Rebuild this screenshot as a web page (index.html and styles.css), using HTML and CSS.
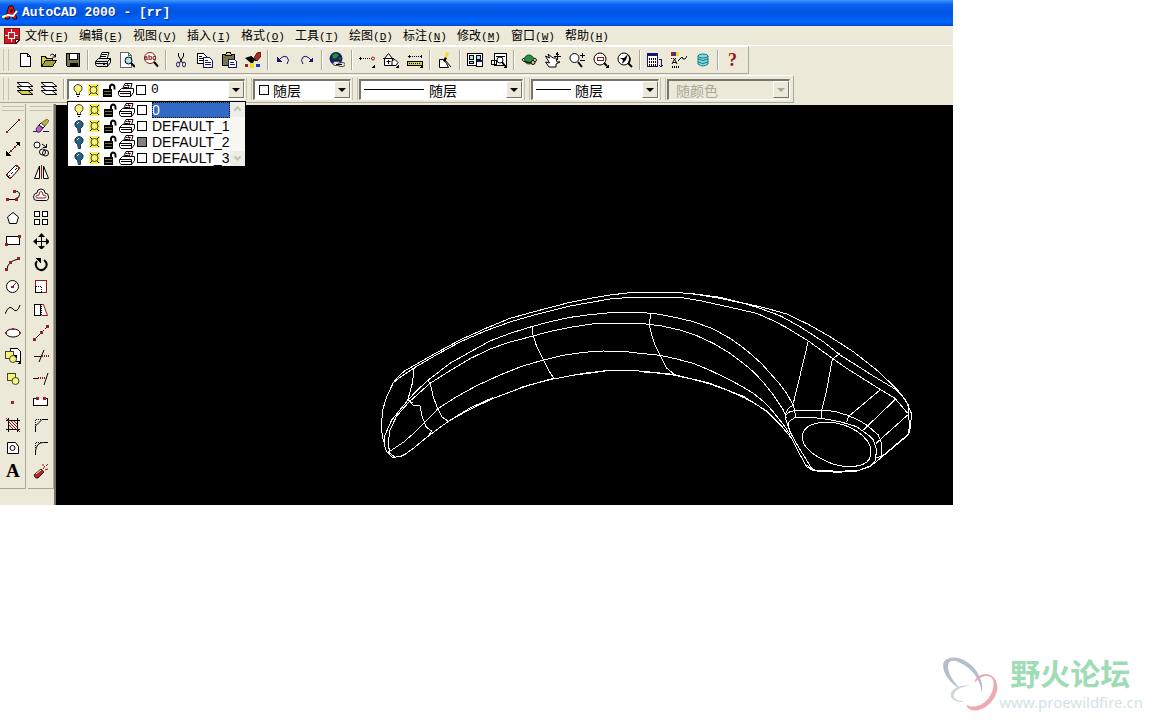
FILE: index.html
```
<!DOCTYPE html>
<html lang="zh-CN">
<head>
<meta charset="utf-8">
<title>AutoCAD 2000 - [rr]</title>
<link rel="stylesheet" href="styles.css">
</head>
<body>
<svg class="sprite" aria-hidden="true">
<symbol id="new" viewBox="0 0 16 16"><path class="w" d="M3.500 1.500h7l3 3v10h-10zM10.500 1.500v3h3"/></symbol>
<symbol id="open" viewBox="0 0 16 16"><path class="y" d="M.5 14.500v-10h4l1 2h6v3"/><path class="o" d="M.5 14.500l4-6h11l-4 6z"/><path class="s" d="M9 3.500q3-3 5 1M14.500 2v3h-3"/></symbol>
<symbol id="save" viewBox="0 0 16 16"><path class="olive" d="M1.500 1.500h13v13h-12l-1-1z"/><path class="w" d="M4.500 1.500h8v6h-8z"/><path class="k" d="M4.500 10.500h8v4h-8z"/><path class="w" d="M6 11.500h1v2H6z"/></symbol>
<symbol id="print" viewBox="0 0 16 16"><path class="w s" d="M4.500 7L7 .5h7L12 7M7 2.500h5M6 4.500h5"/><path class="g s" d="M.5 9.500l3-3h12v4l-3 4H2l-1.500-2z"/><path class="s" d="M.5 9.500h12v5M12.500 9.500l3-3M1 11.500h11"/><path class="y s" d="M8 12.500h2"/></symbol>
<symbol id="preview" viewBox="0 0 16 16"><path class="w gray" d="M1.500.5h8l3 3v12h-11zM9.500.5v3h3"/><circle class="c" cx="9.500" cy="8.500" r="3.500"/><path class="b2 s" d="M12 11l4 4"/></symbol>
<symbol id="find" viewBox="0 0 16 16"><circle class="w rd" cx="7" cy="6" r="5.500"/><path class="b2 s" d="M11 10l4 4.500"/><text class="tiny" x="1" y="8">abc</text></symbol>
<symbol id="cut" viewBox="0 0 16 16"><path class="s" d="M5.500 1v3l4 7M10.500 1v3l-4 7"/><ellipse class="nb" cx="5" cy="12.500" rx="1.500" ry="2.500"/><ellipse class="nb" cx="11" cy="12.500" rx="1.500" ry="2.500"/></symbol>
<symbol id="copy" viewBox="0 0 16 16"><path class="w" d="M.5 1.500h6l3 3v7h-9z"/><path class="w nb" d="M6.500 5.500h6l3 3v7h-9zM8 8.500h3M8 10.500h6M8 12.500h6"/><path d="M2 4.500h3M2 6.500h4M2 8.500h4"/></symbol>
<symbol id="paste" viewBox="0 0 16 16"><path class="olive" d="M1.500 2.500h12v11h-12z"/><path class="y" d="M4.500 3.500l1-3h4l1 3z"/><path class="w nb" d="M7.500 7.500h6l2 2v6h-8zM9 10.500h4M9 12.500h5"/></symbol>
<symbol id="match" viewBox="0 0 16 16"><path class="k s" d="M0 6l6-2 4 4-3 4z"/><path class="dyn s" d="M9 6l3-5 4-1v4l-4 5z"/><path class="w s" d="M6 4l5 5"/><path class="rf" d="M0 12h3v3H0z"/><path class="yy" d="M5 11h4v5H5z"/><path class="bf" d="M11 12h4v3h-4z"/></symbol>
<symbol id="undo" viewBox="0 0 16 16"><path class="nb s" d="M3 9l3-3q3-3 6-1 3 3 0 7"/><path class="nf" d="M2 5v5h5z"/></symbol>
<symbol id="redo" viewBox="0 0 16 16"><path class="nb s" d="M13 9l-3-3Q7 3 4 5q-3 3 0 7"/><path class="nf" d="M14 5v5H9z"/></symbol>
<symbol id="globe" viewBox="0 0 16 16"><circle class="nf" cx="7" cy="6.500" r="6.500"/><path class="gr s" d="M3 3l4-2 3 2-2 3-4 1zM9 7l3-2v3z"/><path class="link s" d="M6 9.500h3a2 2 0 010 4H6a2 2 0 010-4zM11 10.500h3a2 2 0 010 4h-3a2 2 0 010-4z"/><path d="M7 12h6"/></symbol>
<symbol id="track" viewBox="0 0 16 16"><path class="dot" d="M0 6.500h13"/><path d="M1.500 5v3"/><circle class="w rd" cx="14" cy="6.500" r="1.500"/><path class="k" d="M16 12v4h-4z"/></symbol>
<symbol id="ucs" viewBox="0 0 16 16"><path class="w s" d="M1.500 6.500l4-5 4 5v7h-8zM0 6.500h11M5.500 8v4M3.500 9.500h4"/><path class="w s" d="M9 8.500l3-1 3 3-2 3H9z"/><path class="k" d="M16 12v4h-4z"/></symbol>
<symbol id="dist" viewBox="0 0 16 16"><path class="dot" d="M1 4.500h14"/><path class="y" d="M.5 9.500h15v4H.5z"/><path class="dot" d="M2 11h12"/><path d="M2 3v3M14 3v3"/><path class="k" d="M16 12v4h-4z"/></symbol>
<symbol id="redraw" viewBox="0 0 16 16"><path class="w s" d="M2.500 7.500h4l3 4 2 4h-9z"/><path class="k s" d="M6 9l2-4 2 1-2 4z"/><path class="s" d="M8 8l6 7"/><path class="yy s" d="M8 5l1-5 3 1-2 5z"/></symbol>
<symbol id="views" viewBox="0 0 16 16"><path class="w" d="M.5 1.500h15v12H.5z"/><path class="c" d="M2.500 3.500h4v4h-4zM9.500 3.500h4v4h-4zM2.500 9.500h4v2h-4z"/><path class="w" d="M9.500 8.500h6v6h-6z"/><path class="nf" d="M10 8h6v2h-6z"/></symbol>
<symbol id="nview" viewBox="0 0 16 16"><path class="w" d="M3.500 1.500h12v12h-12zM.5 8.500h5v4h-5z"/><path d="M5 4h9"/><circle class="w" cx="9" cy="8" r="3"/><path class="b2 s" d="M11 10l3 4"/><path class="k" d="M16 12v4h-4z"/></symbol>
<symbol id="orbit" viewBox="0 0 16 16"><circle class="gr" cx="8" cy="7.500" r="4.500"/><path class="s" d="M3.500 6Q-2 8 5 10q10 2 10.500-2 0-1.500-3-2"/><circle class="y" cx="12" cy="10.500" r="2"/></symbol>
<symbol id="pan" viewBox="0 0 16 16"><path class="w s" d="M4 15L.5 10l4 1-4-7 4 2L3 2l5 4h3l1 4h3l-4 2v3z"/><path d="M9 4.500h7M12.500 1v7M11 3l1.500-2L14 3"/></symbol>
<symbol id="zoom" viewBox="0 0 16 16"><circle class="w" cx="5.500" cy="6" r="4.500"/><path class="b2 s" d="M9 10l4 5"/><path d="M11 3.500h5M13.500 1v5M11 8.500h5"/></symbol>
<symbol id="zwin" viewBox="0 0 16 16"><circle class="w" cx="7" cy="7" r="6"/><path class="rd" d="M4.500 5.500h6v3h-6z"/><path class="b2 s" d="M11 11l3 3"/><path class="k" d="M16 12v4h-4z"/></symbol>
<symbol id="zprev" viewBox="0 0 16 16"><circle class="w" cx="7" cy="7" r="6"/><path class="k s" d="M3 6h4l4-4-2 6-4 4 1-4zM11 3q4 2 2 8l-2-1q2-3 0-7z"/><path class="b2 s" d="M11 11l4 4"/></symbol>
<symbol id="props" viewBox="0 0 16 16"><path class="w nb" d="M.5 1.500h10v13H.5z"/><path class="nf" d="M0 1h11v3H0z"/><path class="dot b2" d="M2 7h7M2 10h7M2 13h7"/><path class="nb" d="M12 7h2v7M12 13l2 2 2-2"/></symbol>
<symbol id="dc" viewBox="0 0 16 16"><path class="rf" d="M0 0h3v4H0z"/><path class="yy" d="M5 0h3v4H5z"/><path class="bf" d="M3 0h2v4H3z"/><path class="dot" d="M0 6h5"/><path class="w s" d="M7 9l4-4 1 2h2l2-3"/><path class="s" d="M1 12l2.500-5L6 12M2 10.500h3"/><path class="b2 dot" d="M1 14.500h8"/></symbol>
<symbol id="db" viewBox="0 0 16 16"><path class="db s" d="M3 4v8q5 4 10 0V4z"/><ellipse class="db" cx="8" cy="4" rx="5" ry="2"/><path class="teal s" d="M3 7q5 3 10 0M3 10q5 3 10 0"/></symbol>
<symbol id="help" viewBox="0 0 16 16"><text class="qm" x="3" y="14">?</text></symbol>
<symbol id="layers" viewBox="0 0 16 16"><path class="y s" d="M0 9.500h11l5 4H5z"/><path class="w s" d="M0 5.500h11l5 4H5zM0 1.500h11l5 4H5z"/></symbol>
<symbol id="layer2" viewBox="0 0 16 16"><path class="w s" d="M0 9.500h11l5 4H5zM0 5.500h11l5 4H5zM0 1.500h11l5 4H5z"/></symbol>
<symbol id="bulb" viewBox="0 0 16 16"><path class="yl s" d="M6.500 10.500Q3 8 4 5q4-5 8 0 1 3-2.500 5.500v2h-3z"/><path d="M6 12.500h4M7 14.500h2"/></symbol>
<symbol id="bulboff" viewBox="0 0 16 16"><path class="off s" d="M6.500 10.500Q3 8 4 5q4-5 8 0 1 3-2.500 5.500v4h-2z"/><path class="wl s" d="M6 6l2-2"/></symbol>
<symbol id="sun" viewBox="0 0 16 16"><path class="yl2" d="M2 2h11v12H2z"/><circle cx="7.500" cy="8" r="3.500" class="yl"/><path class="s" d="M3 3l2 2M12 3l-2 2M3 13l2-2M12 13l-2-2"/></symbol>
<symbol id="lock" viewBox="0 0 16 16"><path class="k" d="M1 7h9v8H1z"/><path class="olv" d="M2 9.500h7M2 12.500h7"/><path class="lk s" d="M8 8V5q0-2 2-2.500 3 0 2.500 5"/></symbol>
<symbol id="plot" viewBox="0 0 16 16"><path class="w s" d="M4.500 7L7 1.500h7L12.500 7M7 3.500h5M6 5.500h5"/><path class="w s" d="M.5 9.500l3-3h12v4l-3 4H2l-1.500-2zM.5 9.500h12M2 11.500h10M12.500 9.500v5"/><path class="mg s" d="M8 4l2-2M9 6l3-3"/></symbol>

<symbol id="line" viewBox="0 0 16 16"><path d="M2 14L14 2"/><path class="rf" d="M1 13h2v2H1zM13 1h2v2h-2z"/></symbol>
<symbol id="xline" viewBox="0 0 16 16"><path d="M1 15L15 1"/><path class="k" d="M1 15v-5l5 5zM15 1v5l-5-5z"/><path class="rf" d="M5 9h2v2H5zM9 5h2v2H9z"/></symbol>
<symbol id="mline" viewBox="0 0 16 16"><path class="w s" d="M1 11L11 1l4 3L5 15z"/><path class="dot" d="M3 13L13 3"/><path class="rf" d="M1 10h2v2H1zM11 1h2v2h-2zM4 13h2v2H4zM13 3h2v2h-2z"/></symbol>
<symbol id="pline" viewBox="0 0 16 16"><path class="s" d="M2 12.500h9M9 4.500q5.500-1 5.500 3t-4 4"/><path class="rf" d="M1 11h3v3H1zM10 11h3v3h-3zM8 3h3v3H8z"/></symbol>
<symbol id="poly" viewBox="0 0 16 16"><path class="w s" d="M8 2.500L13.500 7l-2 6.500h-7L2.500 7z"/></symbol>
<symbol id="rect" viewBox="0 0 16 16"><path class="w" d="M1.500 3.500h13v8h-13z"/><path class="rf" d="M13 2h3v3h-3zM0 10h3v3H0z"/></symbol>
<symbol id="arc" viewBox="0 0 16 16"><path class="s" d="M2 14q0-9 12-11"/><path class="rf" d="M0 12h3v3H0zM4 5h3v3H4zM12 1h3v3h-3z"/></symbol>
<symbol id="circle" viewBox="0 0 16 16"><circle class="w" cx="7.500" cy="7.500" r="6"/><path class="rd" d="M7 8l4-4"/><path class="rf" d="M6 7h3v2H6z"/></symbol>
<symbol id="spline" viewBox="0 0 16 16"><path class="s" d="M0 12Q4 2 8 7t7-4"/></symbol>
<symbol id="ellipse" viewBox="0 0 16 16"><ellipse class="w" cx="8" cy="8" rx="7" ry="4"/><path class="rf" d="M0 7h2v2H0zM7 3h2v2H7zM14 7h2v2h-2z"/></symbol>
<symbol id="insert" viewBox="0 0 16 16"><path class="w" d="M5.500.5h7l3 3v10h-10z"/><path class="yl" d="M.5 3.500h8v7h-8z"/><circle class="yl" cx="8" cy="11" r="3.500"/><path class="k" d="M16 12v4h-4zM8 7h4v4z"/></symbol>
<symbol id="block" viewBox="0 0 16 16"><path class="yl" d="M2.500 2.500h8v7h-8z"/><circle class="yl" cx="10.500" cy="10" r="3.500"/></symbol>
<symbol id="point" viewBox="0 0 16 16"><path class="rf" d="M6 7h3v3H6z"/></symbol>
<symbol id="hatch" viewBox="0 0 16 16"><path d="M3.500 1v14M12.500 1v14M1 3.500h14M1 12.500h14"/><path class="rd" d="M4 5l7 7M4 8l4 4M6 4l6 6M9 4l3 3M1 1l3 3M12 12l3 3"/></symbol>
<symbol id="region" viewBox="0 0 16 16"><path class="w s" d="M2.500 2.500h8l3 4v7h-11z"/><circle cx="7.500" cy="8" r="2.500"/></symbol>
<symbol id="text" viewBox="0 0 16 16"><text class="biga" x="1" y="14">A</text></symbol>
<symbol id="erase" viewBox="0 0 16 16"><path class="nb" d="M0 13.500h5M10 13.500h6"/><path class="pk s" d="M3 11l3-4 4 3-3 4H4z"/><path class="w s" d="M6 7l2-2 4 3-2 2z"/><path class="olv s" d="M8 5l6-4 2 2-4 5z"/></symbol>
<symbol id="copyo" viewBox="0 0 16 16"><circle class="w" cx="4" cy="4" r="3"/><circle class="w" cx="9.500" cy="11" r="3"/><circle cx="12.500" cy="12" r="3"/><path class="s" d="M9 3l4 3M13.500 3v3.500H10"/></symbol>
<symbol id="mirror" viewBox="0 0 16 16"><path class="w s" d="M6.500 2v12.500h-5zM10.500 2v12.500h5z"/><path class="rd" d="M8.500 1v14"/></symbol>
<symbol id="offset" viewBox="0 0 16 16"><path class="w s" d="M4 6q0-4 4-4t4 4q3.500 0 3.500 4T12 13.500H4Q.5 13.500.5 10T4 6z"/><path class="rd s" d="M6 8q0-3.500 2-3.500T10 8q3 0 3 1.500T12 11H4q-1 0-1-1.500T6 8z"/></symbol>
<symbol id="array" viewBox="0 0 16 16"><path class="w" d="M1.500 1.500h5v5h-5zM9.500 1.500h5v5h-5zM1.500 9.500h5v5h-5zM9.500 9.500h5v5h-5z"/></symbol>
<symbol id="move" viewBox="0 0 16 16"><path d="M1 8.500h15M8.500 1v15"/><path class="k s" d="M8.500 0L12 4H5zM8.500 17L12 13H5zM0 8.500L4 5v7zM17 8.500L13 5v7z"/></symbol>
<symbol id="rotate" viewBox="0 0 16 16"><path class="b2 s" d="M11 4q4 3 2 7-3 5-8 2-4-4-1-8"/><path class="k" d="M2 2h6v6z"/></symbol>
<symbol id="scale" viewBox="0 0 16 16"><path class="w rd" d="M2.500 1.500h11v12h-11z"/><path class="dot" d="M2.500 7.500h6v6"/><path d="M2.500 7v6.500h6"/></symbol>
<symbol id="stretch" viewBox="0 0 16 16"><path class="w" d="M1.500 2.500h6v11h-6z"/><path class="w rd s" d="M8.500 2.500h2l4 11h-6"/><path class="dot" d="M8.500 2v12"/></symbol>
<symbol id="lengthen" viewBox="0 0 16 16"><path d="M2 14l7-7"/><path class="dot" d="M9 7l5-5"/><path class="rf" d="M0 13h3v3H0zM7 6h3v3H7zM13 0h3v3h-3z"/></symbol>
<symbol id="trim" viewBox="0 0 16 16"><path class="s" d="M1 8.500h7M11 2L6 14"/><path class="rd b2 dot" d="M9 8h7"/></symbol>
<symbol id="extend" viewBox="0 0 16 16"><path class="s" d="M0 7.500h5M15 2l-4 12"/><path class="rd b2 dot" d="M5 7h7"/></symbol>
<symbol id="break" viewBox="0 0 16 16"><path class="w" d="M4 4.500H.5v7h14v-7H12"/><path class="rf" d="M3 3h3v3H3zM10 3h3v3h-3z"/></symbol>
<symbol id="chamfer" viewBox="0 0 16 16"><path class="s" d="M2.500 15V9l6.500-6.500h6"/><path class="dot" d="M2.500 8V2.500h6"/></symbol>
<symbol id="fillet" viewBox="0 0 16 16"><path class="s" d="M2.500 15v-4q1-8.500 8-8.500H15"/><path class="dot" d="M2.500 8V2.500h6"/></symbol>
<symbol id="explode" viewBox="0 0 16 16"><path class="dyn s" d="M1 12l7-6 3 3-6 6q-3 1-4-3z"/><path class="rd s" d="M10 6l2-3M12 7l3-1M10 3V1M13 3l2-2"/><path class="wl s" d="M3 11l5-4"/></symbol>
</svg>

<div class="app">
  <header class="title">
    <svg class="ico smooth" viewBox="0 0 16 16" aria-hidden="true"><path fill="#d01818" stroke="#300" d="M3 14L7 1h4l4 13h-4l-1-4H8l-1 4zM8 7h2V4z"/><path stroke="#fff" stroke-width="2" fill="none" d="M0 12l6-2 5 1 4-5"/><path stroke="#fc4" fill="none" d="M1 13l4-2"/></svg>
    <h1>AutoCAD 2000 - [rr]</h1>
  </header>
  <nav class="menu">
    <svg class="doc" viewBox="0 0 16 16" aria-hidden="true"><path fill="#d01820" stroke="#801010" d="M.5.500h15v12l-3 3H.5z"/><path stroke="#fff" fill="none" d="M4.500 4.500h6v6h-6zM7.500 1v3M7.500 11v3M1 7.500h3M11 7.500h3"/><path fill="#fff" stroke="#222" d="M15.500 11.500h-4v4z"/></svg>
    <button>文件<span>(<u>F</u>)</span></button><button>编辑<span>(<u>E</u>)</span></button><button>视图<span>(<u>V</u>)</span></button><button>插入<span>(<u>I</u>)</span></button><button>格式<span>(<u>O</u>)</span></button><button>工具<span>(<u>T</u>)</span></button><button>绘图<span>(<u>D</u>)</span></button><button>标注<span>(<u>N</u>)</span></button><button>修改<span>(<u>M</u>)</span></button><button>窗口<span>(<u>W</u>)</span></button><button>帮助<span>(<u>H</u>)</span></button>
  </nav>
  <div class="row"><div class="bar" role="toolbar" aria-label="标准">
    <i class="grip"></i>
    <button aria-label="新建"><svg class="ico"><use href="#new"/></svg></button><button aria-label="打开"><svg class="ico"><use href="#open"/></svg></button><button aria-label="保存"><svg class="ico"><use href="#save"/></svg></button><i class="sep"></i>
    <button aria-label="打印"><svg class="ico"><use href="#print"/></svg></button><button aria-label="打印预览"><svg class="ico"><use href="#preview"/></svg></button><button aria-label="查找"><svg class="ico"><use href="#find"/></svg></button><i class="sep"></i>
    <button aria-label="剪切"><svg class="ico"><use href="#cut"/></svg></button><button aria-label="复制"><svg class="ico"><use href="#copy"/></svg></button><button aria-label="粘贴"><svg class="ico"><use href="#paste"/></svg></button><button aria-label="特性匹配"><svg class="ico"><use href="#match"/></svg></button><i class="sep"></i>
    <button aria-label="放弃"><svg class="ico"><use href="#undo"/></svg></button><button aria-label="重做"><svg class="ico"><use href="#redo"/></svg></button><i class="sep"></i>
    <button aria-label="超级链接"><svg class="ico"><use href="#globe"/></svg></button><i class="sep"></i>
    <button aria-label="追踪"><svg class="ico"><use href="#track"/></svg></button><button aria-label="UCS"><svg class="ico"><use href="#ucs"/></svg></button><button aria-label="距离"><svg class="ico"><use href="#dist"/></svg></button><i class="sep"></i>
    <button aria-label="重画"><svg class="ico"><use href="#redraw"/></svg></button><i class="sep"></i>
    <button aria-label="空中视图"><svg class="ico"><use href="#views"/></svg></button><button aria-label="命名视图"><svg class="ico"><use href="#nview"/></svg></button><i class="sep"></i>
    <button aria-label="三维动态观察"><svg class="ico"><use href="#orbit"/></svg></button><button aria-label="实时平移"><svg class="ico"><use href="#pan"/></svg></button><button aria-label="实时缩放"><svg class="ico"><use href="#zoom"/></svg></button><button aria-label="窗口缩放"><svg class="ico"><use href="#zwin"/></svg></button><button aria-label="缩放上一个"><svg class="ico"><use href="#zprev"/></svg></button><i class="sep"></i>
    <button aria-label="特性"><svg class="ico"><use href="#props"/></svg></button><button aria-label="设计中心"><svg class="ico"><use href="#dc"/></svg></button><button aria-label="数据库连接"><svg class="ico"><use href="#db"/></svg></button><i class="sep"></i>
    <button aria-label="帮助"><svg class="ico"><use href="#help"/></svg></button>
  </div></div>
  <div class="row"><div class="bar" role="toolbar" aria-label="对象特性">
    <i class="grip"></i>
    <button aria-label="图层置为当前"><svg class="ico"><use href="#layers"/></svg></button><button aria-label="图层"><svg class="ico"><use href="#layer2"/></svg></button><i class="sep"></i>
    <div class="combo layer">
      <svg class="ico"><use href="#bulb"/></svg><svg class="ico"><use href="#sun"/></svg><svg class="ico"><use href="#lock"/></svg><svg class="ico"><use href="#plot"/></svg><i class="swatch"></i>
      <select class="mono" aria-label="当前图层"><option>0</option></select><i class="arrow"></i>
      <div class="list">
        <ul role="listbox" aria-label="图层列表">
          <li role="option" aria-selected="true"><svg class="ico"><use href="#bulb"/></svg><svg class="ico"><use href="#sun"/></svg><svg class="ico"><use href="#lock"/></svg><svg class="ico"><use href="#plot"/></svg><i class="swatch"></i><span class="name">0</span></li>
          <li role="option"><svg class="ico"><use href="#bulboff"/></svg><svg class="ico"><use href="#sun"/></svg><svg class="ico"><use href="#lock"/></svg><svg class="ico"><use href="#plot"/></svg><i class="swatch"></i><span class="name">DEFAULT_1</span></li>
          <li role="option"><svg class="ico"><use href="#bulboff"/></svg><svg class="ico"><use href="#sun"/></svg><svg class="ico"><use href="#lock"/></svg><svg class="ico"><use href="#plot"/></svg><i class="swatch dark"></i><span class="name">DEFAULT_2</span></li>
          <li role="option"><svg class="ico"><use href="#bulboff"/></svg><svg class="ico"><use href="#sun"/></svg><svg class="ico"><use href="#lock"/></svg><svg class="ico"><use href="#plot"/></svg><i class="swatch"></i><span class="name">DEFAULT_3</span></li>
        </ul>
        <div class="scroll"><svg viewBox="0 0 14 14"><path d="M4 8l3-3 3 3"/></svg><svg viewBox="0 0 14 14"><path d="M4 5l3 3 3-3"/></svg></div>
      </div>
    </div><i class="grip"></i>
    <div class="combo color"><i class="swatch"></i><select aria-label="颜色"><option>随层</option></select><i class="arrow"></i></div><i class="grip"></i>
    <div class="combo ltype"><i class="rule"></i><select aria-label="线型"><option>随层</option></select><i class="arrow"></i></div><i class="grip"></i>
    <div class="combo lweight"><i class="rule"></i><select aria-label="线宽"><option>随层</option></select><i class="arrow"></i></div><i class="grip"></i>
    <div class="combo plotstyle off"><select aria-label="打印样式" disabled><option>随颜色</option></select><i class="arrow"></i></div>
  </div></div>
  <main class="work">
    <div class="side">
      <div class="tools" role="toolbar" aria-label="绘图">
        <i class="hgrip"></i>
        <button aria-label="直线"><svg class="ico"><use href="#line"/></svg></button><button aria-label="构造线"><svg class="ico"><use href="#xline"/></svg></button><button aria-label="多线"><svg class="ico"><use href="#mline"/></svg></button><button aria-label="多段线"><svg class="ico"><use href="#pline"/></svg></button><button aria-label="正多边形"><svg class="ico"><use href="#poly"/></svg></button><button aria-label="矩形"><svg class="ico"><use href="#rect"/></svg></button><button aria-label="圆弧"><svg class="ico"><use href="#arc"/></svg></button><button aria-label="圆"><svg class="ico"><use href="#circle"/></svg></button><button aria-label="样条曲线"><svg class="ico"><use href="#spline"/></svg></button><button aria-label="椭圆"><svg class="ico"><use href="#ellipse"/></svg></button><button aria-label="插入块"><svg class="ico"><use href="#insert"/></svg></button><button aria-label="创建块"><svg class="ico"><use href="#block"/></svg></button><button aria-label="点"><svg class="ico"><use href="#point"/></svg></button><button aria-label="图案填充"><svg class="ico"><use href="#hatch"/></svg></button><button aria-label="面域"><svg class="ico"><use href="#region"/></svg></button><button aria-label="多行文字"><svg class="ico smooth"><use href="#text"/></svg></button>
      </div>
      <div class="tools" role="toolbar" aria-label="修改">
        <i class="hgrip"></i>
        <button aria-label="删除"><svg class="ico"><use href="#erase"/></svg></button><button aria-label="复制对象"><svg class="ico"><use href="#copyo"/></svg></button><button aria-label="镜像"><svg class="ico"><use href="#mirror"/></svg></button><button aria-label="偏移"><svg class="ico"><use href="#offset"/></svg></button><button aria-label="阵列"><svg class="ico"><use href="#array"/></svg></button><button aria-label="移动"><svg class="ico"><use href="#move"/></svg></button><button aria-label="旋转"><svg class="ico"><use href="#rotate"/></svg></button><button aria-label="缩放"><svg class="ico"><use href="#scale"/></svg></button><button aria-label="拉伸"><svg class="ico"><use href="#stretch"/></svg></button><button aria-label="拉长"><svg class="ico"><use href="#lengthen"/></svg></button><button aria-label="修剪"><svg class="ico"><use href="#trim"/></svg></button><button aria-label="延伸"><svg class="ico"><use href="#extend"/></svg></button><button aria-label="打断"><svg class="ico"><use href="#break"/></svg></button><button aria-label="倒角"><svg class="ico"><use href="#chamfer"/></svg></button><button aria-label="圆角"><svg class="ico"><use href="#fillet"/></svg></button><button aria-label="分解"><svg class="ico"><use href="#explode"/></svg></button>
      </div>
    </div>
    <div class="canvas">
      <svg viewBox="0 0 2691 1200" preserveAspectRatio="xMinYMin meet" role="img" aria-label="rr">
        <g transform="translate(942 525)">
          <path d="M43 490L38 475 34 440 38 390 50 350 70 308 82 292 105 272 130 258 200 218 270 180 345 146 420 115 500 93 600 67 660 55 720 45 780 38H812"/>
          <path d="M70 308L90 292 135 262 200 224 270 186 345 153 420 126 500 103 600 78 720 57 780 52H812"/>
          <path d="M43 490L45 465 65 420 110 365 140 332 175 300 240 250 300 216 360 183 420 160 485 140 540 125 600 112 660 104 720 98 810 97"/>
          <path d="M75 532L60 520 54 490 60 450 80 408 115 368 180 310 240 272 300 236 360 207 420 186 490 168 540 154 600 142 680 130 810 130"/>
          <path d="M52 518L62 512 100 487 130 461 165 426 205 385 260 350 320 317 390 285 455 259 520 240 580 226 640 217 700 213 770 215 810 220"/>
          <path d="M43 490L46 506 52 518 68 532 90 530 105 523 130 505 175 468 235 424 300 388 370 355 450 325 500 309 550 297 640 280 700 273 800 271 812 275"/>
          <path d="M235 424L300 384 370 352M450 323L550 295M600 287L640 282 720 271H800"/>
          <path d="M133 260L127 310 114 358 130 377H150L155 405 168 440 184 453 175 470M110 360L130 370"/>
          <path d="M175 300L183 320 190 352 203 385 215 410 235 424M487 140L489 165 500 200 520 240 535 270 553 297"/>
        </g>
        <g transform="translate(1752 525)">
          <path d="M0 38H115L165 42 240 52 310 69 380 85 440 102 505 133 570 170 640 215 710 270 745 303 775 333 797 360 814 400 812 440 805 465 760 502 715 540 690 560 650 573 590 577 520 570 500 555"/>
          <path d="M160 42L240 55 310 70 360 85 420 107 480 140 550 185 600 225 640 250 700 288 770 330 788 350 805 375 808 440 805 460"/>
          <path d="M0 52H120L180 62 240 75 350 100 400 122 440 143 505 183 580 237 620 265 720 328 765 355 803 400M577 238L600 220"/>
          <path d="M0 97L60 103 110 113 160 125 220 147 270 175 300 196 330 220 365 251 395 285 420 313 440 340 462 380"/>
          <path d="M0 130L60 137 120 150 170 167 220 190 270 220 305 246 340 275 370 307 400 345 430 390 440 415"/>
          <path d="M0 220L60 226 110 237 160 250 210 271 260 295 300 316 340 340 370 364 395 390 435 440 450 465"/>
          <path d="M0 275L50 279 100 285 155 297 210 312 260 330 310 352 345 370 380 395 430 445 455 475 475 515 500 560 520 572H580"/>
          <path d="M0 273L100 283 210 310 310 349 380 393 430 442"/>
          <path d="M32 100L28 135 35 165 45 195 65 235 80 264 105 285"/>
          <path d="M505 183L460 370M577 237L560 330 545 390V415M720 330L625 410 620 425M767 357L670 450M803 405L708 490M808 460L725 530 705 533"/>
          <path d="M435 415L437 405 450 395 470 391H560L590 396 620 405 655 420 680 435 715 465 725 490 724 530M437 402L445 385 460 375 467 410"/>
          <path d="M452 458L445 440 447 425 465 412H500L545 415 600 425 650 440 685 465 700 480 710 510 705 545 690 558 660 570 600 574H535L515 565 470 492 450 455 435 410"/>
          <path d="M487 470C490 440 515 428 555 427C620 424 692 468 693 515C694 555 655 560 620 560C570 557 485 515 487 470Z"/>
        </g>
      </svg>
    </div>
  </main>
</div>
<footer class="brand">
  <svg viewBox="0 0 58 56" aria-hidden="true"><path fill="#b3bfcd" d="M2 5C10-4 29 3 37 18c4 8 5 14 3 18 0-8-6-20-17-27C14 3 6 2 6 11c1 9 7 16 13 22C8 28-2 14 2 5z"/><path fill="#efaab0" d="M39 19c12-5 19 6 17 16-4 15-20 24-29 18-2-2-2-4-2-4 6 4 15 2 22-6 8-11 8-25-4-23-4 1-8 4-10 7 0-3 2-6 6-8z"/><path fill="#d0d5db" d="M28 30c-9-2-20 3-19 10 1 5 9 8 14 5-5 1-11-1-11-5 0-6 9-10 16-10z"/></svg>
  <div><strong>野火论坛</strong><a href="#">www.proewildfire.cn</a></div>
</footer>
</body>
</html>
```
FILE: styles.css
```
* { box-sizing: border-box; }
body {
  margin: 0;
  min-height: 100vh;
  display: flex;
  flex-direction: column;
  background: #fff;
  color: #000;
  font: 12px/16px "Liberation Sans", "Noto Sans CJK SC", sans-serif;
}
button { border: 0; padding: 0; background: none; color: inherit; font: inherit; }
.sprite { display: none; }
.app { margin-right: 199px; background: #ece9d8; }

/* icons */
.ico { width: 16px; height: 16px; flex: none; display: block; fill: none; stroke: #000; stroke-width: 1; shape-rendering: crispEdges; }
.smooth, .s, circle, ellipse { shape-rendering: auto; }
.w { fill: #fff; }
.y { fill: #d8d040; }
.o { fill: #a8a030; }
.g { fill: #ddd; }
.c { fill: #a8e4ee; }
.k { fill: #000; stroke: none; }
.olive { fill: #77754c; }
.gray { stroke: #666; }
.b2 { stroke-width: 2; }
.rd { stroke: #901818; }
.rf { fill: #982020; stroke: none; }
.yy { fill: #f0dc20; stroke: none; }
.bf { fill: #1838d0; stroke: none; }
.nb { stroke: #181870; }
.nf { fill: #181870; stroke: none; }
.gr { fill: #289040; stroke: #125020; }
.link { stroke: #555; fill: #ddd; }
.dot { stroke-dasharray: 1 1; }
.db { fill: #80dce0; stroke: #187880; }
.teal { stroke: #187880; }
.yl { fill: #f8f480; stroke: #444420; }
.yl2 { fill: #f8f050; stroke: none; }
.off { fill: #286080; stroke: #183850; }
.wl { stroke: #eee; }
.olv { stroke: #777440; fill: #b8b040; }
.lk { stroke-width: 2; }
.mg { stroke: #a03060; }
.pk { fill: #c060c0; stroke: #402050; }
.dyn { fill: #b02828; stroke: #501010; }
.tiny { font: bold 7px "Liberation Sans", sans-serif; fill: #801818; stroke: none; }
.qm { font: bold 18px "Liberation Serif", serif; fill: #a01010; stroke: none; }
.biga { font: bold 19px "Liberation Serif", serif; fill: #000; stroke: none; }

/* window frame */
.title {
  height: 26px;
  display: flex;
  align-items: center;
  gap: 4px;
  padding-left: 2px;
  background: linear-gradient(#3c96ff, #0a5ff0 18%, #0054e3 50%, #0066ff 85%, #0048c8);
  color: #fff;
}
.title h1 { margin: 0; font: bold 13px/26px "Liberation Mono", monospace; text-shadow: 1px 1px #0a2f88; }
.menu { height: 20px; display: flex; align-items: center; padding-left: 4px; border-bottom: 1px solid #fff; }
.doc { width: 16px; height: 16px; flex: none; shape-rendering: crispEdges; }
.menu button { width: 54px; padding-top: 1px; white-space: nowrap; font-size: 12px; line-height: 18px; }
.menu span { font: 11px/18px "Liberation Mono", monospace; }

/* toolbars */
.row { height: 29px; display: flex; }
.bar {
  display: flex;
  align-items: center;
  padding: 0 3px;
  border-top: 1px solid #fff;
  border-right: 1px solid #aca899;
  border-bottom: 1px solid #aca899;
  margin-bottom: 1px;
}
.bar > button { width: 24px; height: 24px; display: grid; place-items: center; }
.grip { width: 6px; height: 22px; margin: 0 1px; border: solid #c5c1ae; border-width: 0 1px; flex: none; }
.grip:first-child { margin: 0 4px 0 0; }
.sep { width: 2px; height: 20px; margin: 0 2px; background: #aca899; border-right: 1px solid #fff; flex: none; }
.combo {
  position: relative;
  display: flex;
  align-items: center;
  height: 21px;
  padding-left: 1px;
  background: #fff;
  border: 1px solid #fff;
  border-top: 2px solid #77756a;
  border-left: 2px solid #77756a;
}
.combo select {
  appearance: none;
  flex: 1;
  min-width: 0;
  height: 18px;
  padding: 0;
  border: 0;
  background: none;
  color: #000;
  font: 14px/16px "Noto Sans CJK SC", sans-serif;
}
.combo .mono { font: 13px/18px "Liberation Mono", monospace; }
.arrow {
  width: 16px;
  height: 17px;
  flex: none;
  background: #ece9d8;
  border: 1px solid;
  border-color: #fff #77756a #77756a #fff;
  display: grid;
  place-items: center;
}
.arrow::before { content: ""; border: solid transparent; border-width: 4px 4px 0; border-top-color: #000; }
.swatch { width: 10px; height: 10px; margin: 0 5px 0 2px; flex: none; border: 1px solid #000; background: #fff; }
.swatch.dark { background: #808080; }
.rule { height: 1px; background: #000; flex: none; }
.layer { width: 178px; }
.color { width: 98px; padding-left: 4px; }
.color .swatch { margin: 0 4px 0 0; }
.ltype { width: 164px; padding-left: 3px; }
.ltype .rule { width: 60px; margin-right: 5px; }
.lweight { width: 128px; padding-left: 3px; }
.lweight .rule { width: 35px; margin-right: 4px; }
.plotstyle { width: 123px; padding-left: 7px; }
.off { background: #ece9d8; }
.combo.off select { color: #aca899; opacity: 1; }
.off .arrow::before { border-top-color: #aca899; }

/* opened layer list */
.list {
  position: absolute;
  z-index: 2;
  top: calc(100% + 2px);
  left: -2px;
  width: 179px;
  display: flex;
  background: #fff;
  border: 1px solid #000;
}
.list ul { flex: 1; margin: 0; padding: 0 0 0 3px; list-style: none; }
.list li { height: 16px; display: flex; align-items: center; }
.name { flex: 1; height: 16px; font: 14px/16px "Liberation Sans", sans-serif; }
[aria-selected="true"] .name { background: #316ac5; color: #fff; outline: 1px dotted #112; outline-offset: -1px; }
.scroll { width: 16px; display: flex; flex-direction: column; justify-content: space-between; background: #f8f7f2; }
.scroll svg { width: 15px; height: 15px; background: #eeede5; fill: none; stroke: #c5c3b8; stroke-width: 2; }

/* drawing area */
.work { display: flex; min-height: 401px; }
.side { flex: none; display: flex; align-items: flex-start; gap: 2px; border-right: 2px solid #77756a; }
.tools {
  width: 26px;
  padding: 2px 0 6px;
  display: flex;
  flex-direction: column;
  align-items: center;
  border-right: 1px solid #aca899;
  border-bottom: 1px solid #aca899;
}
.hgrip { width: 22px; height: 5px; margin-bottom: 3px; border: solid #c5c1ae; border-width: 1px 0; }
.tools button { width: 24px; height: 23px; display: grid; place-items: center; }
.canvas { flex: 1; min-width: 0; margin-top: 1px; background: #000; }
.canvas svg { display: block; width: 100%; height: 400px; fill: none; stroke: #fff; stroke-width: 3; shape-rendering: crispEdges; }

/* site mark */
.brand { margin-top: auto; padding: 0 9px 8px; display: flex; justify-content: flex-end; align-items: flex-end; }
.brand svg { width: 57px; height: 56px; flex: none; }
.brand div { display: flex; flex-direction: column; }
.brand strong { padding-left: 11px; font: bold 30px/40px "Noto Sans CJK SC", sans-serif; color: #9fdcb5; }
.brand a { font: 15px/20px "Noto Sans", sans-serif; color: #cfe3e6; text-decoration: none; }
```
